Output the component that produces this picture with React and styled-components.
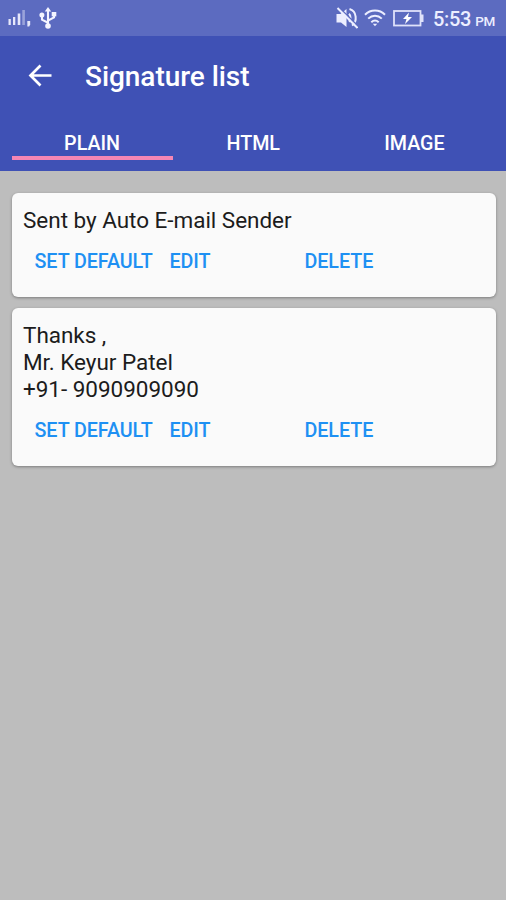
import styled, { createGlobalStyle } from "styled-components";

const TABS = ["PLAIN", "HTML", "IMAGE"];

const SIGNATURES = [
  { id: 1, text: "Sent by Auto E-mail Sender" },
  { id: 2, text: "Thanks ,\nMr. Keyur Patel\n+91- 9090909090" },
];

const SignalIcon = () => (
  <svg width="24" height="20" viewBox="0 0 24 20" fill="#e6e8fa">
    <rect x="0.5" y="11" width="2.3" height="6" />
    <rect x="5" y="9" width="2.3" height="8" />
    <rect x="9.7" y="5.5" width="2.6" height="11.5" />
    <rect x="14.3" y="2" width="2.6" height="15" opacity="0.45" />
    <path d="M19.3 13h2.9v3.5l-1 2h-1.8z" />
  </svg>
);

const UsbIcon = () => (
  <svg width="18" height="22" viewBox="0 0 18 22" fill="#f4f5ff">
    <path d="M9 0l3.2 4.4H5.8z" />
    <path
      d="M9 3v16M9 15.8L3 12.6V8.5M9 13.6l6-3.2V7.5"
      fill="none"
      stroke="#f4f5ff"
      strokeWidth="2.1"
    />
    <circle cx="2.9" cy="8" r="2.5" />
    <rect x="12.7" y="5" width="4.6" height="4.4" />
    <circle cx="9" cy="19" r="2.8" />
  </svg>
);

const MutedIcon = () => (
  <svg width="22" height="22" viewBox="0 0 22 22" fill="none">
    <path d="M0.5 7h4L10.5 2v18L5 15.5H0.5z" fill="#eceeff" />
    <path
      d="M13 6.8c2 2 2 6 0 8M13.5 2c7.5 2 8 13 2.5 16.5"
      stroke="#eceeff"
      strokeWidth="2"
    />
    <path d="M3 0.5L22 19" stroke="#5c6bc0" strokeWidth="1.6" />
    <path d="M1.5 1L21.5 21" stroke="#eceeff" strokeWidth="2" />
  </svg>
);

const WifiIcon = () => (
  <svg width="22" height="18" viewBox="0 0 22 18" fill="none">
    <path
      d="M1 5.7C6.5 0.2 15.5 0.2 21 5.7M4.2 9.6c4-3.9 9.6-3.9 13.6 0M7.3 13.2c2.3-2.2 5.1-2.2 7.4 0"
      stroke="#eceeff"
      strokeWidth="2"
    />
    <path d="M8.8 14.8h4.4L11 17.3z" fill="#eceeff" />
  </svg>
);

const BatteryIcon = () => (
  <svg width="31" height="17" viewBox="0 0 31 17" fill="none">
    <rect x="1" y="1" width="26.5" height="14.5" stroke="#dfe2fa" strokeWidth="1.8" />
    <rect x="28" y="4.5" width="2.5" height="7.5" fill="#dfe2fa" />
    <path d="M16 2.5l-6 6.5h3.5L12 14l7-7h-4z" fill="#fff" />
  </svg>
);

const BackIcon = () => (
  <svg width="24" height="24" viewBox="0 0 24 24" fill="none">
    <path d="M23.5 11.5h-21M12.5 1.5l-10 10 10 10" stroke="#fff" strokeWidth="2.7" />
  </svg>
);

const App = () => {
  return (
    <Screen>
      <GlobalStyle />
      <StatusBar>
        <StatusGroup $gap="7px">
          <SignalIcon />
          <UsbIcon />
        </StatusGroup>
        <StatusGroup $gap="6.5px">
          <MutedIcon />
          <WifiIcon />
          <BatteryIcon />
          <Clock>
            <span>5:53</span>
            <small>PM</small>
          </Clock>
        </StatusGroup>
      </StatusBar>

      <Header>
        <Toolbar>
          <BackButton aria-label="Back">
            <BackIcon />
          </BackButton>
          <Title>Signature list</Title>
        </Toolbar>
        <Tabs>
          {TABS.map((tab, index) => (
            <Tab key={tab} $active={index === 0}>
              {tab}
            </Tab>
          ))}
        </Tabs>
      </Header>

      <SignatureList>
        {SIGNATURES.map(({ id, text }) => (
          <SignatureCard key={id}>
            <SignatureText>{text}</SignatureText>
            <Actions>
              <ActionButton>SET DEFAULT</ActionButton>
              <ActionButton>EDIT</ActionButton>
              <ActionButton>DELETE</ActionButton>
            </Actions>
          </SignatureCard>
        ))}
      </SignatureList>
    </Screen>
  );
};

export default App;

const GlobalStyle = createGlobalStyle`
  * {
    box-sizing: border-box;
  }

  body {
    margin: 0;
    font-family: Roboto, sans-serif;
  }

  button {
    padding: 0;
    border: 0;
    background: none;
    font: inherit;
    color: inherit;
  }
`;

const Screen = styled.div`
  min-height: 900px;
  background: #bdbdbd;
`;

const StatusBar = styled.div`
  display: flex;
  justify-content: space-between;
  height: 36px;
  padding: 0 11px 0 8px;
  background: #5c6bc0;
`;

const StatusGroup = styled.div`
  display: flex;
  align-items: center;
  gap: ${({ $gap }) => $gap};
`;

const Clock = styled.div`
  display: flex;
  align-items: baseline;
  gap: 4px;
  margin: 3px 0 0 2.5px;
  font-size: 20px;
  font-weight: 500;
  line-height: 24px;
  letter-spacing: -0.3px;
  color: #eceeff;

  small {
    font-size: 13.5px;
  }
`;

const Header = styled.header`
  height: 134.5px;
  background: #3f51b5;
  color: #fff;
`;

const Toolbar = styled.div`
  display: flex;
  align-items: center;
  height: 79px;
  padding-left: 27.5px;
`;

const BackButton = styled.button`
  display: flex;
  width: 24px;
  margin-right: 33.5px;
`;

const Title = styled.h1`
  margin: 2px 0 0;
  font-size: 28px;
  font-weight: 500;
  letter-spacing: -0.05px;
`;

const Tabs = styled.nav`
  display: grid;
  grid-template-columns: repeat(3, 1fr);
  height: 45px;
  padding: 0 11px 0 11.5px;
`;

const Tab = styled.button`
  padding-top: 16px;
  border-bottom: 4px solid ${({ $active }) => ($active ? "#f586b4" : "transparent")};
  font-size: 19.7px;
  font-weight: 500;
`;

const SignatureList = styled.main`
  display: flex;
  flex-direction: column;
  gap: 11.5px;
  padding: 22.5px 10.5px 0 11.5px;
`;

const SignatureCard = styled.article`
  padding: 14px 11.5px 0;
  border-radius: 6px;
  background: #fafafa;
  box-shadow: 0 1px 3px rgba(0, 0, 0, 0.35);
`;

const SignatureText = styled.p`
  margin: 0;
  font-size: 22.5px;
  line-height: 27px;
  letter-spacing: -0.03px;
  color: #1c1c1c;
  white-space: pre-line;
`;

const Actions = styled.div`
  display: grid;
  grid-template-columns: 135px 135px 1fr;
  height: 62.5px;
  padding: 15.5px 0 0 11.5px;
`;

const ActionButton = styled.button`
  height: 24px;
  font-size: 19.7px;
  font-weight: 500;
  line-height: 24px;
  letter-spacing: -0.05px;
  text-align: left;
  color: #1e90f3;
`;
